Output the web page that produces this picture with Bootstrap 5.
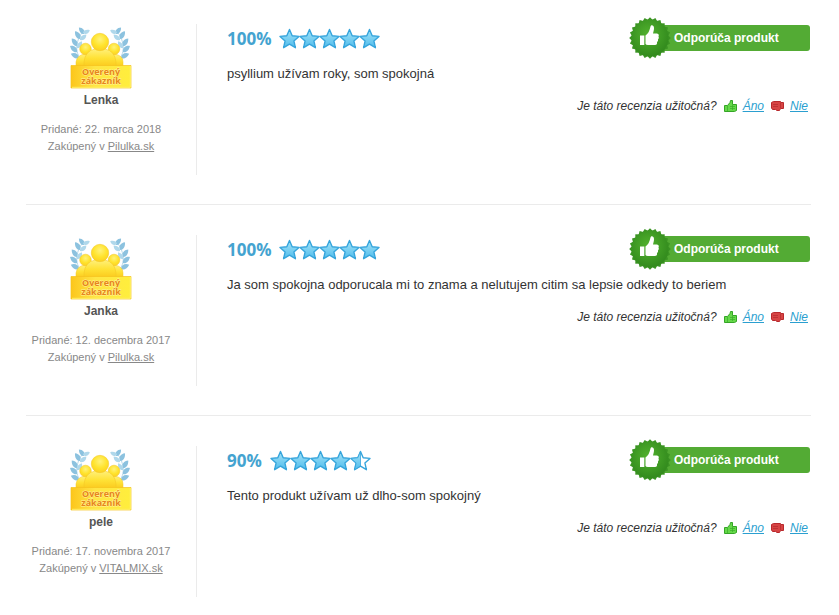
<!DOCTYPE html>
<html lang="sk">
<head>
<meta charset="utf-8">
<meta name="viewport" content="width=device-width, initial-scale=1">
<title>Recenzie zákazníkov</title>
<link rel="stylesheet" href="https://cdn.jsdelivr.net/npm/bootstrap@5.3.0/dist/css/bootstrap.min.css">
<style>
body{font-family:"Liberation Sans",Arial,sans-serif;font-size:13px;line-height:20px;color:#333;background:#fff}
.reviews{padding:24px 28px 0 26px}
.review{padding-bottom:29px;margin-bottom:30px;border-bottom:1px solid #ebebeb}
.review:last-child{border:0;margin:0;padding:0}
.author{width:171px;min-height:151px;padding-right:20px;border-right:1px solid #ebebeb;font-size:11px;line-height:17px;color:#888}
.author a{color:#888}
.author-name{font-size:12px;line-height:18px;color:#555;margin:2px 0 12px}
.seal{width:64px;height:65px}
.opinion{padding-left:30px}
.score{height:30px;font-family:"Open Sans",sans-serif;font-size:17px;font-weight:700;line-height:30px;color:#44a3d0}
.stars{width:101px;height:22px}
.recommend{width:181px;height:42px;margin:-7px 1px 0 0;color:#fff;font-size:12px;font-weight:700}
.recommend-bar{height:26px;line-height:26px;background:#53ab34;border-radius:0 3px 3px 0;margin-left:-21px;padding-left:24px}
.rosette{width:42px;height:42px;position:relative}
.comment{margin:5px 0 12px}
.vote{font-size:12px;font-style:italic;margin-right:3px}
.vote a{color:#2b9fd0;margin-left:6px}
.thumb{width:13px;height:12px;margin-left:7px}
</style>
<script src="https://cdn.jsdelivr.net/npm/bootstrap@5.3.0/dist/js/bootstrap.bundle.min.js"></script>
</head>
<body>
<svg width="0" height="0" class="position-absolute" aria-hidden="true">
<defs>
<linearGradient id="gold" x1="0" y1="0" x2="0" y2="1"><stop offset="0" stop-color="#fff07a"/><stop offset=".5" stop-color="#ffe236"/><stop offset="1" stop-color="#fbc81c"/></linearGradient>
<linearGradient id="plate" x1="0" y1="0" x2="1" y2="0"><stop offset="0" stop-color="#fcc61c"/><stop offset=".4" stop-color="#ffe545"/><stop offset="1" stop-color="#ffee3c"/></linearGradient>
<radialGradient id="head" cx=".5" cy=".35" r=".65"><stop offset="0" stop-color="#fff27a"/><stop offset=".6" stop-color="#ffe32c"/><stop offset="1" stop-color="#fcd022"/></radialGradient>
<linearGradient id="sky" x1="0" y1="0" x2="0" y2="1"><stop offset="0" stop-color="#a5e4f8"/><stop offset="1" stop-color="#50bcec"/></linearGradient>
<radialGradient id="leafgreen" cx=".45" cy=".4" r=".6"><stop offset="0" stop-color="#52b22e"/><stop offset="1" stop-color="#328a1d"/></radialGradient>
<path id="leaf" d="M0 0C-3-1-4-5-2-9C2-7 3-3 0 0z"/>
<g id="branch">
<path d="M14 37C6 31 5 18 15 6" fill="none" stroke="#b5d9ea" stroke-width="1"/>
<g fill="#8cc2df">
<use href="#leaf" transform="translate(15 10) rotate(-25) scale(.9)"/>
<use href="#leaf" transform="translate(11 15) rotate(-20)"/>
<use href="#leaf" transform="translate(8 22) rotate(-22)"/>
<use href="#leaf" transform="translate(8 28) rotate(-36)"/>
<use href="#leaf" transform="translate(10 34) rotate(-50)"/>
</g>
<g fill="#b0d8eb">
<use href="#leaf" transform="translate(14 9) rotate(80) scale(.8)"/>
<use href="#leaf" transform="translate(11 16) rotate(62) scale(.9)"/>
<use href="#leaf" transform="translate(8 24) rotate(48) scale(.9)"/>
</g>
</g>
<symbol id="seal" viewBox="0 0 64 65">
<use href="#branch"/><use href="#branch" transform="translate(62 0) scale(-1 1)"/>
<g stroke="#f3c424" stroke-width=".5">
<path d="M7 43V38Q8 31 16 30Q24 31 26 37V43zM36 43V37Q37 31 45 30Q54 31 54 38V43z" fill="url(#gold)"/>
<circle cx="16.500" cy="25" r="5.800" fill="url(#head)"/><circle cx="45" cy="25" r="5.800" fill="url(#head)"/>
<path d="M15 43V38Q16 27 26 25H36Q46 27 47 38V43z" fill="url(#gold)"/>
<circle cx="31" cy="18" r="8.700" fill="url(#head)"/>
</g>
<path d="M2 41.500H62V64H2z" fill="url(#plate)" stroke="#f5c11e" stroke-width=".7"/>
<path d="M3 63.300H61.300V42" fill="none" stroke="#fff06a"/>
</symbol>
<path id="star" d="M10.500 1.500L13.200 7.800L20 8.400L14.900 12.900L16.400 19.700L10.500 16.100L4.600 19.700L6.100 12.900L1 8.400L7.800 7.800z"/>
<g id="fullstar"><use href="#star" fill="url(#sky)" stroke="#36a5dc" stroke-width="1.400" stroke-linejoin="round"/></g>
<g id="halfstar"><use href="#star" fill="#fff" stroke="#36a5dc" stroke-width="1.400" stroke-linejoin="round"/><path d="M10.500 1.500V16.100L4.600 19.700L6.100 12.900L1 8.400L7.800 7.800z" fill="url(#sky)" stroke="#36a5dc" stroke-width=".8"/></g>
<symbol id="five" viewBox="0 0 101 22"><use href="#fullstar"/><use href="#fullstar" x="20"/><use href="#fullstar" x="40"/><use href="#fullstar" x="60"/><use href="#fullstar" x="80"/></symbol>
<symbol id="fourhalf" viewBox="0 0 101 22"><use href="#fullstar"/><use href="#fullstar" x="20"/><use href="#fullstar" x="40"/><use href="#fullstar" x="60"/><use href="#halfstar" x="80"/></symbol>
<path id="tooth" d="M6.300 6.300H35.700V35.700H6.300z"/>
<symbol id="rosette" viewBox="0 0 42 42">
<g fill="#3b9423"><use href="#tooth"/><use href="#tooth" transform="rotate(15 21 21)"/><use href="#tooth" transform="rotate(30 21 21)"/><use href="#tooth" transform="rotate(45 21 21)"/><use href="#tooth" transform="rotate(60 21 21)"/><use href="#tooth" transform="rotate(75 21 21)"/></g>
<circle cx="21" cy="21" r="18.500" fill="url(#leafgreen)"/>
<path d="M11 18.500H15.300V28H11zM16.500 18.500C19 17 20.500 14 21.500 9.500C22 7.500 25 8 25 11C25 13 24.500 14.500 24 16.500H28Q30.500 17 29.500 19.500Q30.500 21 29 22.500Q29.500 24 28 25Q28.500 28 26 28H19Q17 28 16.500 27z" fill="#fff"/>
</symbol>
<symbol id="yes" viewBox="0 0 13 12"><path d="M.5 5.500H3.500L6 2.500L6.500.500H8.500V4.500H12.500V10.500L10.500 11.500H.500z" fill="#65d849" stroke="#35a526"/><path d="M3.500 6V11M6 6.500H11M6 8.500H11M8.500 5V10" stroke="#39ad29" stroke-width=".7"/></symbol>
<symbol id="no" viewBox="0 0 13 12"><path d="M.5 2.500L2.500 1.500H9.500V2.500H12.500V8.500H9.500L8.500 10.500H6L4.500 9.500H1.500L.5 8z" fill="#d74444" stroke="#b8292d"/><path d="M2 4.500H7M2 6.500H7M9.500 3V8" stroke="#b42b2e" stroke-width=".7"/></symbol>
<g id="sealtext" font-family="Open Sans, sans-serif" font-size="9" font-weight="700" text-anchor="middle" fill="#e8861a" stroke="#fff3a0" stroke-width=".8" paint-order="stroke"><text x="32" y="51">Overený</text><text x="32" y="60">zákazník</text></g>
</defs>
</svg>
<main class="reviews">
<article class="review d-flex">
<div class="author flex-shrink-0 text-center">
<svg class="seal d-block mx-auto" role="img" aria-label="Overený zákazník"><use href="#seal"/><use href="#sealtext"/></svg>
<h2 class="author-name fw-bold">Lenka</h2>
<div>Pridané: 22. marca 2018</div><div>Zakúpený v <a href="#pilulka">Pilulka.sk</a></div>
</div>
<div class="opinion flex-grow-1">
<div class="d-flex justify-content-between">
<div class="score d-flex align-items-center gap-2"><span>100%</span><svg class="stars" role="img" aria-label="5 z 5 hviezdičiek"><use href="#five"/></svg></div>
<div class="recommend d-flex align-items-center"><svg class="rosette flex-shrink-0" aria-hidden="true"><use href="#rosette"/></svg><div class="recommend-bar flex-grow-1">Odporúča produkt</div></div>
</div>
<p class="comment">psyllium užívam roky, som spokojná</p>
<div class="vote d-flex justify-content-end align-items-center"><span>Je táto recenzia užitočná?</span><svg class="thumb" aria-hidden="true"><use href="#yes"/></svg><a href="#ano">Áno</a><svg class="thumb" aria-hidden="true"><use href="#no"/></svg><a href="#nie">Nie</a></div>
</div>
</article>
<article class="review d-flex">
<div class="author flex-shrink-0 text-center">
<svg class="seal d-block mx-auto" role="img" aria-label="Overený zákazník"><use href="#seal"/><use href="#sealtext"/></svg>
<h2 class="author-name fw-bold">Janka</h2>
<div>Pridané: 12. decembra 2017</div><div>Zakúpený v <a href="#pilulka">Pilulka.sk</a></div>
</div>
<div class="opinion flex-grow-1">
<div class="d-flex justify-content-between">
<div class="score d-flex align-items-center gap-2"><span>100%</span><svg class="stars" role="img" aria-label="5 z 5 hviezdičiek"><use href="#five"/></svg></div>
<div class="recommend d-flex align-items-center"><svg class="rosette flex-shrink-0" aria-hidden="true"><use href="#rosette"/></svg><div class="recommend-bar flex-grow-1">Odporúča produkt</div></div>
</div>
<p class="comment">Ja som spokojna odporucala mi to znama a nelutujem citim sa lepsie odkedy to beriem</p>
<div class="vote d-flex justify-content-end align-items-center"><span>Je táto recenzia užitočná?</span><svg class="thumb" aria-hidden="true"><use href="#yes"/></svg><a href="#ano">Áno</a><svg class="thumb" aria-hidden="true"><use href="#no"/></svg><a href="#nie">Nie</a></div>
</div>
</article>
<article class="review d-flex">
<div class="author flex-shrink-0 text-center">
<svg class="seal d-block mx-auto" role="img" aria-label="Overený zákazník"><use href="#seal"/><use href="#sealtext"/></svg>
<h2 class="author-name fw-bold">pele</h2>
<div>Pridané: 17. novembra 2017</div><div>Zakúpený v <a href="#vitalmix">VITALMIX.sk</a></div>
</div>
<div class="opinion flex-grow-1">
<div class="d-flex justify-content-between">
<div class="score d-flex align-items-center gap-2"><span>90%</span><svg class="stars" role="img" aria-label="4,5 z 5 hviezdičiek"><use href="#fourhalf"/></svg></div>
<div class="recommend d-flex align-items-center"><svg class="rosette flex-shrink-0" aria-hidden="true"><use href="#rosette"/></svg><div class="recommend-bar flex-grow-1">Odporúča produkt</div></div>
</div>
<p class="comment">Tento produkt užívam už dlho-som spokojný</p>
<div class="vote d-flex justify-content-end align-items-center"><span>Je táto recenzia užitočná?</span><svg class="thumb" aria-hidden="true"><use href="#yes"/></svg><a href="#ano">Áno</a><svg class="thumb" aria-hidden="true"><use href="#no"/></svg><a href="#nie">Nie</a></div>
</div>
</article>
</main>
</body>
</html>
